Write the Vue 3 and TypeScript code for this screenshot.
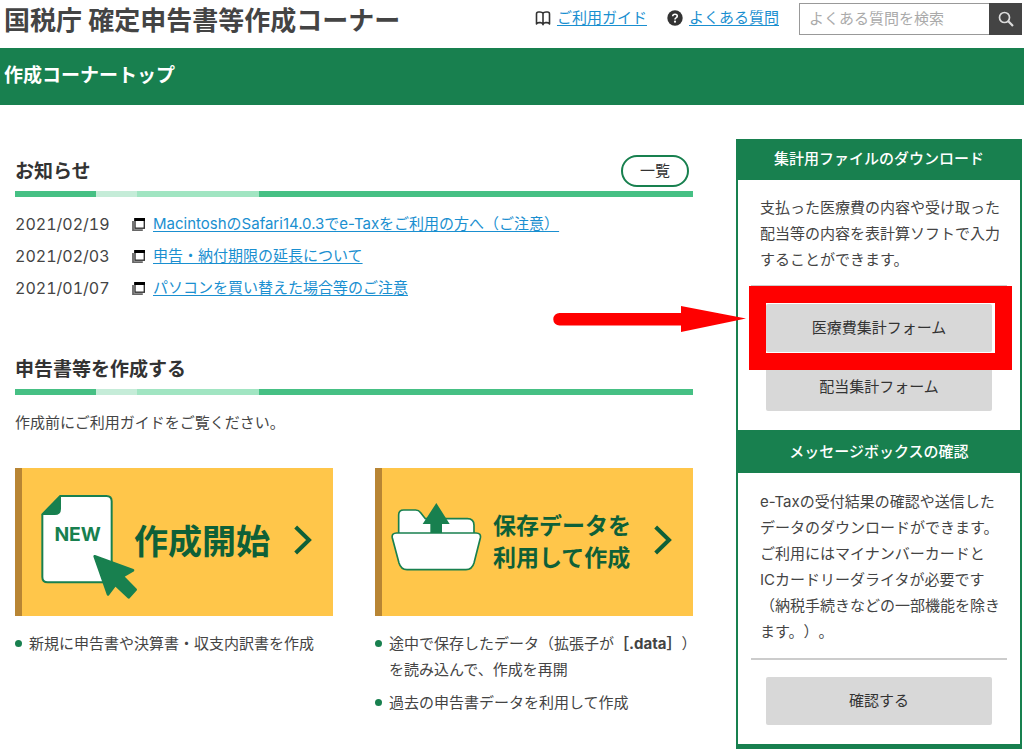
<script setup lang="ts">
import { ref } from 'vue'

interface Notice {
  date: string
  title: string
}

const keyword = ref('')

const notices: Notice[] = [
  { date: '2021/02/19', title: 'MacintoshのSafari14.0.3でe-Taxをご利用の方へ（ご注意）' },
  { date: '2021/02/03', title: '申告・納付期限の延長について' },
  { date: '2021/01/07', title: 'パソコンを買い替えた場合等のご注意' },
]
</script>

<template>
  <div class="page">
    <header class="site-header">
      <h1 class="site-title">国税庁 確定申告書等作成コーナー</h1>
      <nav class="help">
        <span class="help-item">
          <svg class="help-icon" viewBox="0 0 16 16" aria-hidden="true">
            <path d="M8 3.200 Q7.200 2 5 2 H3.500 Q1.500 2 1.500 4 V14 Q2 12.600 4 12.600 H5.500 Q7.500 12.600 8 14.600 Q8.500 12.600 10.500 12.600 H12 Q14 12.600 14.500 14 V4 Q14.500 2 12.500 2 H11 Q8.800 2 8 3.200 V14.600" fill="none" stroke="#333" stroke-width="1.600" stroke-linejoin="round" />
          </svg>
          <a href="#guide">ご利用ガイド</a>
        </span>
        <span class="help-item">
          <svg class="help-icon" viewBox="0 0 16 16" aria-hidden="true">
            <circle cx="8" cy="8" r="7.700" fill="#333" />
            <path d="M5.700 6.300 Q5.700 4.200 8 4.200 Q10.300 4.200 10.300 6.100 Q10.300 7.200 9 7.900 Q8 8.400 8 9.600" fill="none" stroke="#fff" stroke-width="1.600" />
            <circle cx="8" cy="11.700" r="1.100" fill="#fff" />
          </svg>
          <a href="#faq">よくある質問</a>
        </span>
      </nav>
      <form class="search" @submit.prevent>
        <input v-model="keyword" type="text" placeholder="よくある質問を検索" aria-label="よくある質問を検索" />
        <button type="submit" aria-label="検索">
          <svg viewBox="0 0 16 16" aria-hidden="true">
            <circle cx="6.500" cy="6.500" r="5" fill="none" stroke="#ddd" stroke-width="1.700" />
            <path d="M10.300 10.300 L15 15" stroke="#ddd" stroke-width="2.200" />
          </svg>
        </button>
      </form>
    </header>

    <div class="page-bar"><h2>作成コーナートップ</h2></div>

    <div class="columns">
      <main class="main">
        <section class="news">
          <div class="heading">
            <h3>お知らせ</h3>
            <a class="list-button" href="#news">一覧</a>
          </div>
          <div class="stripe"></div>
          <ul class="notices">
            <li v-for="notice in notices" :key="notice.date">
              <time>{{ notice.date }}</time>
              <svg viewBox="0 0 13 13" aria-hidden="true">
                <path d="M1 3 V12.200 H10.800" fill="none" stroke="#666" stroke-width="1.800" />
                <rect x="3" y=".8" width="9.300" height="9.400" fill="#fff" stroke="#333" stroke-width="1.400" />
                <path d="M2.300 1.500 H13" stroke="#000" stroke-width="3" />
              </svg>
              <a href="#notice">{{ notice.title }}</a>
            </li>
          </ul>
        </section>

        <section>
          <div class="heading"><h3>申告書等を作成する</h3></div>
          <div class="stripe"></div>
          <p class="lead">作成前にご利用ガイドをご覧ください。</p>
          <div class="choices">
            <div>
              <a class="card card-new" href="#new">
                <svg class="art-new" viewBox="120 89 282 345" aria-hidden="true">
                  <path d="M181 122 H319 Q335 122 335 138 V365 Q335 381 319 381 H143 Q127 381 127 365 V177 Z" fill="#fff" stroke="#18804f" stroke-width="6" stroke-linejoin="round" />
                  <path d="M181 122 V160 Q181 177 164 177 H127 Z" fill="#18804f" stroke="#18804f" stroke-width="4" stroke-linejoin="round" />
                  <text x="233" y="256" text-anchor="middle" class="new-label">NEW</text>
                  <path d="M284 303 L399 345 L368 363 L407 403 L386 426 L346 388 L324 417 Z" fill="#18804f" stroke="#18804f" stroke-width="8" stroke-linejoin="round" />
                </svg>
                <span class="card-title">作成開始</span>
                <svg class="chevron" viewBox="882 209 54 105" aria-hidden="true">
                  <path d="M887 215 L927 254 L887 293" fill="none" stroke="#0e6038" stroke-width="12" />
                </svg>
              </a>
              <ul class="points">
                <li>新規に申告書や決算書・収支内訳書を作成</li>
              </ul>
            </div>
            <div>
              <a class="card card-saved" href="#saved">
                <svg class="art-folder" viewBox="93 145 273 234" aria-hidden="true">
                  <path d="M116 240 V181 Q116 166 131 166 H167 Q176 166 182 174 L196 192 H322 Q342 192 342 212 V240 Z" fill="#fff" stroke="#18804f" stroke-width="5" />
                  <path d="M229 145 L269 208 H246 V238 H211 V208 H188 Z" fill="#18804f" />
                  <path d="M110 235 H348 Q364 235 361 250 L342 325 Q336 345 318 345 H141 Q123 345 117 325 L97 250 Q94 235 110 235 Z" fill="#fff" stroke="#18804f" stroke-width="5" />
                </svg>
                <span class="card-title">保存データを<br />利用して作成</span>
                <svg class="chevron" viewBox="882 209 54 105" aria-hidden="true">
                  <path d="M887 215 L927 254 L887 293" fill="none" stroke="#0e6038" stroke-width="12" />
                </svg>
              </a>
              <ul class="points">
                <li>途中で保存したデータ（拡張子が<b>［.data］</b>）<br />を読み込んで、作成を再開</li>
                <li>過去の申告書データを利用して作成</li>
              </ul>
            </div>
          </div>
        </section>
      </main>

      <aside class="side">
        <section class="panel">
          <h3>集計用ファイルのダウンロード</h3>
          <p>支払った医療費の内容や受け取った<br />配当等の内容を表計算ソフトで入力<br />することができます。</p>
          <hr />
          <div class="actions">
            <div class="marked">
              <button type="button">医療費集計フォーム</button>
              <span class="frame"></span>
              <svg class="arrow" viewBox="0 0 193 26" aria-hidden="true">
                <path d="M6.500 7 H128 V0 L193 12.500 L128 26 V19.500 H6.500 A6.250 6.250 0 0 1 6.500 7 Z" fill="#f00" />
              </svg>
            </div>
            <button type="button">配当集計フォーム</button>
          </div>
        </section>
        <section class="panel panel-message">
          <h3>メッセージボックスの確認</h3>
          <p>e-Taxの受付結果の確認や送信した<br />データのダウンロードができます。<br />ご利用にはマイナンバーカードと<br />ICカードリーダライタが必要です<br />（納税手続きなどの一部機能を除き<br />ます。）。</p>
          <hr />
          <div class="actions">
            <button type="button">確認する</button>
          </div>
        </section>
      </aside>
    </div>
  </div>
</template>

<style>
body {
  margin: 0;
  background: #fff;
}
</style>

<style scoped>
.page {
  font-family: Inter, "Noto Sans CJK JP", sans-serif;
  font-size: 15px;
  line-height: 26px;
  color: #444;
  text-spacing-trim: space-all;
}

h1,
h2,
h3,
p,
ul {
  margin: 0;
  padding: 0;
}

ul {
  list-style: none;
}

a {
  color: #1a8fd0;
  text-decoration-thickness: 1px;
  text-underline-offset: 2px;
  text-decoration-skip-ink: none;
}

svg {
  display: block;
  flex: none;
}

button,
input {
  font: inherit;
}

.site-header {
  display: flex;
  align-items: flex-start;
  height: 48px;
  padding: 0 2px 0 4px;
}

.site-title {
  flex: 1;
  font-size: 26px;
  line-height: 42px;
  white-space: nowrap;
}

.help {
  display: flex;
  gap: 20px;
  margin-right: 20px;
  padding-top: 5px;
}

.help-item {
  display: flex;
  align-items: center;
  gap: 6px;
  white-space: nowrap;
}

.help-icon {
  width: 16px;
  height: 16px;
}

.search {
  display: flex;
  width: 223px;
  height: 32px;
  margin-top: 3px;
}

.search input {
  box-sizing: border-box;
  flex: 1;
  min-width: 0;
  padding: 0 9px;
  border: 1px solid #999;
  border-right: 0;
  border-radius: 0;
  background: #fff;
  color: #444;
}

.search input::placeholder {
  color: #aaa;
  opacity: 1;
}

.search button {
  display: grid;
  place-items: center;
  width: 33px;
  padding: 0;
  border: 0;
  background: #444;
}

.search button svg {
  width: 16px;
  height: 16px;
}

.page-bar {
  padding: 15px 4px 16px;
  background: #18804f;
  color: #fff;
}

.page-bar h2 {
  font-size: 19px;
  line-height: 26px;
}

.columns {
  display: flex;
  align-items: flex-start;
  gap: 43px;
  padding: 34px 2px 0 15px;
}

.main {
  flex: 1;
  min-width: 0;
  padding-top: 12px;
}

.heading {
  display: flex;
  align-items: center;
  justify-content: space-between;
  height: 40px;
  padding-right: 4px;
}

.heading h3 {
  font-size: 19px;
  line-height: 26px;
  padding-top: 2px;
  color: #333;
}

.list-button {
  box-sizing: border-box;
  width: 68px;
  border: 2px solid #18804f;
  border-radius: 16px;
  line-height: 28px;
  text-align: center;
  text-decoration: none;
  color: #333;
}

.stripe {
  height: 6px;
  background: linear-gradient(90deg, #46c084 12%, #c5ecd8 12% 18%, #a1e5c2 18% 36%, #46c084 36%);
}

.notices {
  padding: 11px 0 45px;
}

.notices li {
  display: grid;
  grid-template-columns: 117px 21px 1fr;
  align-items: center;
  height: 32px;
  white-space: nowrap;
}

.notices time {
  font-size: 16px;
  font-variant-numeric: tabular-nums;
}

.notices svg {
  width: 13px;
  height: 13px;
}

.notices a {
  justify-self: start;
}

.lead {
  padding: 15px 0 32px;
}

.choices {
  display: grid;
  grid-template-columns: repeat(2, minmax(0, 1fr));
  gap: 42px;
}

.card {
  display: flex;
  align-items: center;
  height: 148px;
  padding-right: 21px;
  border-left: 7px solid #b88534;
  background: #ffc64a;
  color: #0e6038;
  text-decoration: none;
  font-weight: 700;
  white-space: nowrap;
}

.card-new {
  padding-left: 18px;
  font-size: 34px;
}

.card-saved {
  gap: 11px;
  padding-left: 9px;
  font-size: 23px;
  line-height: 32px;
}

.art-new {
  width: 94px;
  height: 115px;
  overflow: visible;
}

.new-label {
  font-size: 58px;
  font-weight: 700;
  fill: #18804f;
}

.art-folder {
  width: 91px;
  height: 78px;
}

.chevron {
  width: 18px;
  height: 35px;
  margin-left: auto;
}

.points {
  padding-top: 15px;
  white-space: nowrap;
}

.points li {
  position: relative;
  margin-bottom: 7px;
  padding-left: 14px;
}

.points li::before {
  content: "";
  position: absolute;
  top: 9px;
  left: 0;
  width: 7px;
  height: 7px;
  border-radius: 50%;
  background: #18804f;
}

.side {
  box-sizing: border-box;
  width: 286px;
  border: solid #18804f;
  border-width: 0 2px 5px;
}

.panel {
  padding-bottom: 19px;
}

.panel h3 {
  height: 41px;
  background: #18804f;
  color: #fff;
  font-size: 15px;
  font-weight: 500;
  line-height: 39px;
  text-align: center;
}

.panel p {
  padding: 15px 10px 12px 22px;
  white-space: nowrap;
}

.panel hr {
  height: 2px;
  margin: 0 13px;
  border: 0;
  background: #ccc;
}

.panel-message h3 {
  height: 43px;
  line-height: 43px;
}

.panel-message p {
  padding: 16px 10px 13px 22px;
}

.actions {
  display: grid;
  gap: 11px;
  padding: 17px 28px 0;
}

.actions button {
  width: 100%;
  height: 48px;
  padding: 0;
  border: 0;
  border-radius: 2px;
  background: #d8d8d8;
  color: #333;
}

.marked {
  position: relative;
  z-index: 1;
}

.frame {
  position: absolute;
  inset: -18px -20px -18px -17px;
  border: 17px solid #f00;
  pointer-events: none;
}

.arrow {
  position: absolute;
  top: 2px;
  right: calc(100% + 20px);
  width: 193px;
  height: 26px;
}
</style>
